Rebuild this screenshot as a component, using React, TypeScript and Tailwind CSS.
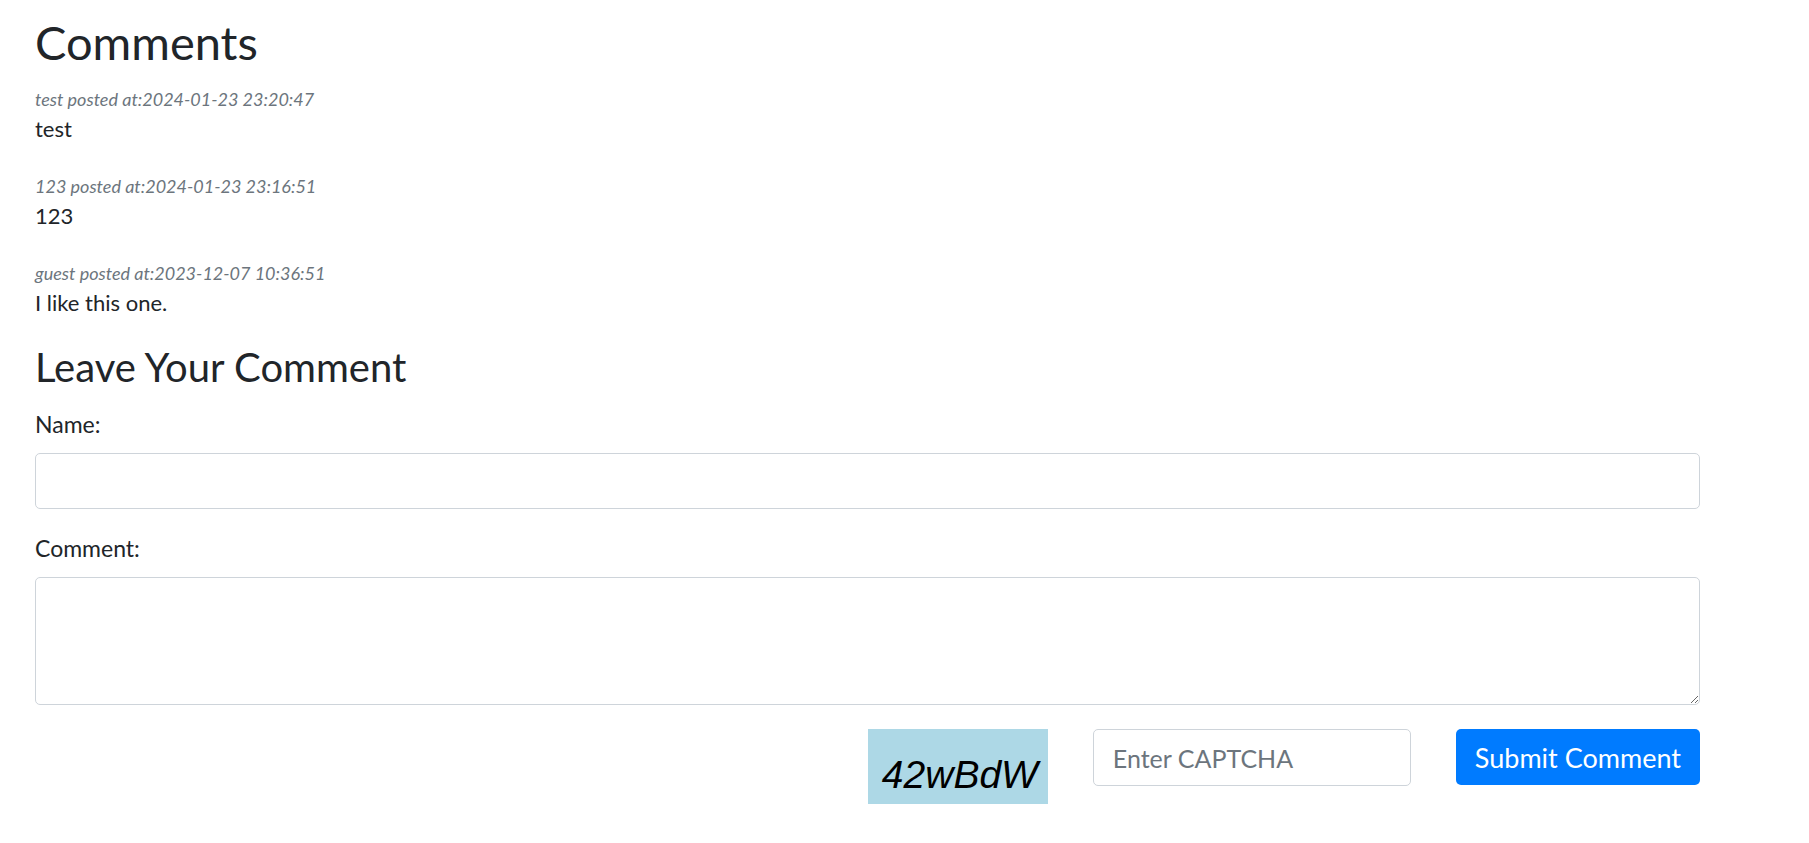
import React, { useState } from 'react';

type Comment = {
  id: number;
  author: string;
  postedAt: string;
  body: string;
};

const comments: Comment[] = [
  { id: 1, author: 'test', postedAt: '2024-01-23 23:20:47', body: 'test' },
  { id: 2, author: '123', postedAt: '2024-01-23 23:16:51', body: '123' },
  { id: 3, author: 'guest', postedAt: '2023-12-07 10:36:51', body: 'I like this one.' },
];

const App: React.FC = () => {
  const [name, setName] = useState('');
  const [comment, setComment] = useState('');
  const [captcha, setCaptcha] = useState('');

  return (
    <div className="min-h-screen bg-white font-['Lato',sans-serif] text-[#212529]">
      <div className="ml-[35px] w-[1665px] pt-[14px]">
        {/* Comment list */}
        <h1 className="text-[47px] leading-[56px] font-normal mb-[16px]">Comments</h1>
        <div className="flex flex-col gap-[28px]">
          {comments.map((c) => (
            <div key={c.id}>
              <p className="text-[18px] italic text-[#6c757d] leading-[26px]">
                {c.author} posted at:{c.postedAt}
              </p>
              <p className="text-[22px] leading-[33px]">{c.body}</p>
            </div>
          ))}
        </div>

        {/* Comment form */}
        <h2 className="text-[40px] leading-[48px] font-normal mt-[24px] mb-[16px]">Leave Your Comment</h2>
        <form onSubmit={(e) => e.preventDefault()}>
          <label className="block text-[23px] leading-[34px] mb-[12px]">Name:</label>
          <input
            type="text"
            value={name}
            onChange={(e) => setName(e.target.value)}
            className="block w-full h-[56px] border border-[#ced4da] rounded-[5px] px-[19px] text-[23px] outline-none"
          />
          <label className="block text-[23px] leading-[34px] mt-[22px] mb-[12px]">Comment:</label>
          <textarea
            value={comment}
            onChange={(e) => setComment(e.target.value)}
            className="block w-full h-[128px] border border-[#ced4da] rounded-[5px] px-[19px] py-[10px] text-[23px] outline-none"
          />
          <div className="flex justify-end items-start gap-[45px] mt-[24px]">
            <div className="w-[180px] h-[75px] bg-[#add8e6] pl-[14px] pt-[26px]">
              <span className="block font-['Liberation_Sans',sans-serif] italic text-[39px] leading-none text-black select-none">
                42wBdW
              </span>
            </div>
            <input
              type="text"
              placeholder="Enter CAPTCHA"
              value={captcha}
              onChange={(e) => setCaptcha(e.target.value)}
              className="w-[318px] h-[57px] border border-[#ced4da] rounded-[5px] px-[19px] text-[25px] placeholder:text-[#6c757d] outline-none"
            />
            <button
              type="submit"
              className="h-[56px] px-[19px] bg-[#007bff] text-white text-[27px] leading-none rounded-[5px]"
            >
              Submit Comment
            </button>
          </div>
        </form>
      </div>
    </div>
  );
};

export default App;
